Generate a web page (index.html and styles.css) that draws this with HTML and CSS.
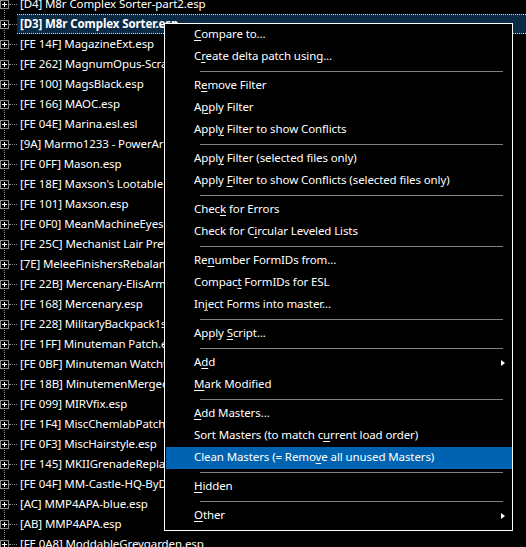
FILE: index.html
```html
<!DOCTYPE html>
<html>
<head>
<meta charset="utf-8">
<link rel="stylesheet" href="styles.css">
</head>
<body>
<div class="tree">
  <div class="row first"><span class="box"></span><span class="conn"></span><span class="label">[D4] M8r Complex Sorter-part2.esp</span></div>
  <div class="row"><span class="box"></span><span class="conn"></span><span class="label selected">[D3] M8r Complex Sorter.esp</span></div>
  <div class="row"><span class="box"></span><span class="conn"></span><span class="label">[FE 14F] MagazineExt.esp</span></div>
  <div class="row"><span class="box"></span><span class="conn"></span><span class="label">[FE 262] MagnumOpus-Scrap.esp</span></div>
  <div class="row"><span class="box"></span><span class="conn"></span><span class="label">[FE 100] MagsBlack.esp</span></div>
  <div class="row"><span class="box"></span><span class="conn"></span><span class="label">[FE 166] MAOC.esp</span></div>
  <div class="row"><span class="box"></span><span class="conn"></span><span class="label">[FE 04E] Marina.esl.esl</span></div>
  <div class="row"><span class="box"></span><span class="conn"></span><span class="label">[9A] Marmo1233 - PowerArmor.esp</span></div>
  <div class="row"><span class="box"></span><span class="conn"></span><span class="label">[FE 0FF] Mason.esp</span></div>
  <div class="row"><span class="box"></span><span class="conn"></span><span class="label">[FE 18E] Maxson's Lootable Armor.esp</span></div>
  <div class="row"><span class="box"></span><span class="conn"></span><span class="label">[FE 101] Maxson.esp</span></div>
  <div class="row"><span class="box"></span><span class="conn"></span><span class="label">[FE 0F0] MeanMachineEyes.esp</span></div>
  <div class="row"><span class="box"></span><span class="conn"></span><span class="label">[FE 25C] Mechanist Lair Prewar.esp</span></div>
  <div class="row"><span class="box"></span><span class="conn"></span><span class="label">[7E] MeleeFinishersRebalanced.esp</span></div>
  <div class="row"><span class="box"></span><span class="conn"></span><span class="label">[FE 22B] Mercenary-ElisArmor.esp</span></div>
  <div class="row"><span class="box"></span><span class="conn"></span><span class="label">[FE 168] Mercenary.esp</span></div>
  <div class="row"><span class="box"></span><span class="conn"></span><span class="label">[FE 228] MilitaryBackpack1st.esp</span></div>
  <div class="row"><span class="box"></span><span class="conn"></span><span class="label">[FE 1FF] Minuteman Patch.esp</span></div>
  <div class="row"><span class="box"></span><span class="conn"></span><span class="label">[FE 0BF] Minuteman Watchtower.esp</span></div>
  <div class="row"><span class="box"></span><span class="conn"></span><span class="label">[FE 18B] MinutemenMerged.esp</span></div>
  <div class="row"><span class="box"></span><span class="conn"></span><span class="label">[FE 099] MIRVfix.esp</span></div>
  <div class="row"><span class="box"></span><span class="conn"></span><span class="label">[FE 1F4] MiscChemlabPatch.esp</span></div>
  <div class="row"><span class="box"></span><span class="conn"></span><span class="label">[FE 0F3] MiscHairstyle.esp</span></div>
  <div class="row"><span class="box"></span><span class="conn"></span><span class="label">[FE 145] MKIIGrenadeReplacer.esp</span></div>
  <div class="row"><span class="box"></span><span class="conn"></span><span class="label">[FE 04F] MM-Castle-HQ-ByDefault.esp</span></div>
  <div class="row"><span class="box"></span><span class="conn"></span><span class="label">[AC] MMP4APA-blue.esp</span></div>
  <div class="row"><span class="box"></span><span class="conn"></span><span class="label">[AB] MMP4APA.esp</span></div>
  <div class="row"><span class="box"></span><span class="conn"></span><span class="label">[FE 0A8] ModdableGreygarden.esp</span></div>
</div>

<div class="menu">
  <div class="item"><u>C</u>ompare to...</div>
  <div class="item">C<u>r</u>eate delta patch using...</div>
  <div class="sep"></div>
  <div class="item">R<u>e</u>move Filter</div>
  <div class="item">A<u>p</u>ply Filter</div>
  <div class="item">Appl<u>y</u> Filter to show Conflicts</div>
  <div class="sep"></div>
  <div class="item">Appl<u>y</u> Filter (selected files only)</div>
  <div class="item">Apply <u>F</u>ilter to show Conflicts (selected files only)</div>
  <div class="sep"></div>
  <div class="item">Chec<u>k</u> for Errors</div>
  <div class="item">Check for C<u>i</u>rcular Leveled Lists</div>
  <div class="sep"></div>
  <div class="item">Re<u>n</u>umber FormIDs from...</div>
  <div class="item">Compac<u>t</u> FormIDs for ESL</div>
  <div class="item">In<u>j</u>ect Forms into master...</div>
  <div class="sep"></div>
  <div class="item">Apply <u>S</u>cript...</div>
  <div class="sep"></div>
  <div class="item sub">A<u>d</u>d</div>
  <div class="item"><u>M</u>ark Modified</div>
  <div class="sep"></div>
  <div class="item"><u>A</u>dd Masters...</div>
  <div class="item">Sort Masters (to match c<u>u</u>rrent load order)</div>
  <div class="item hot">Clean Masters (= Remo<u>v</u>e all unused Masters)</div>
  <div class="sep"></div>
  <div class="item"><u>H</u>idden</div>
  <div class="sep"></div>
  <div class="item sub"><u>O</u>ther</div>
</div>
</body>
</html>
```

FILE: styles.css
```css
html, body {
  margin: 0;
  padding: 0;
  background: #000;
  overflow: hidden;
}
body {
  width: 526px;
  height: 547px;
  position: relative;
  font-family: "Noto Sans", "Open Sans", sans-serif;
  font-size: 11.5px;
  letter-spacing: -0.1px;
  color: #fff;
}
.tree {
  display: flex;
  flex-direction: column;
  background-image: repeating-linear-gradient(to bottom, #8a8a8a 0 1px, transparent 1px 2px);
  background-size: 1px 100%;
  background-position: 4px 0;
  background-repeat: no-repeat;
  margin-top: -6px;
}
.row {
  display: flex;
  align-items: center;
  height: 20px;
  white-space: nowrap;
}
.box {
  flex: none;
  width: 9px;
  height: 9px;
  box-sizing: border-box;
  border: 1px solid #8c8c8c;
  background:
    linear-gradient(#fff, #fff) center / 5px 1px no-repeat,
    linear-gradient(#fff, #fff) center / 1px 5px no-repeat,
    #000;
}
.conn {
  flex: none;
  width: 8px;
  height: 0;
  border-top: 1px dotted #8a8a8a;
}
.label {
  padding: 0 3px;
  line-height: 20px;
  height: 20px;
  box-sizing: border-box;
}
.label.selected {
  flex: 1;
  font-weight: bold;
  background: #0b2a46;
  border-top: 1px dotted #e6dcc6;
  border-bottom: 1px dotted #e6dcc6;
  line-height: 18px;
}
.menu {
  position: absolute;
  left: 164px;
  top: 23px;
  width: 349px;
  box-sizing: border-box;
  border: 1px solid #fff;
  background: #000;
  padding: 0 0 3px 0;
}
.item {
  position: relative;
  height: 22px;
  line-height: 20px;
  padding-left: 29px;
  white-space: nowrap;
}
.item u {
  text-underline-offset: 2px;
}
.item.hot {
  background: #0063b1;
  margin-left: 1px;
  padding-left: 28px;
}
.item.sub::after {
  content: "";
  position: absolute;
  left: 336px;
  top: 8px;
  border-left: 4px solid #fff;
  border-top: 3.5px solid transparent;
  border-bottom: 3.5px solid transparent;
}
.sep {
  height: 7px;
  box-sizing: border-box;
  padding-top: 3px;
}
.sep::before {
  content: "";
  display: block;
  height: 1px;
  margin: 0 9px 0 35px;
  background: #808080;
}
```
